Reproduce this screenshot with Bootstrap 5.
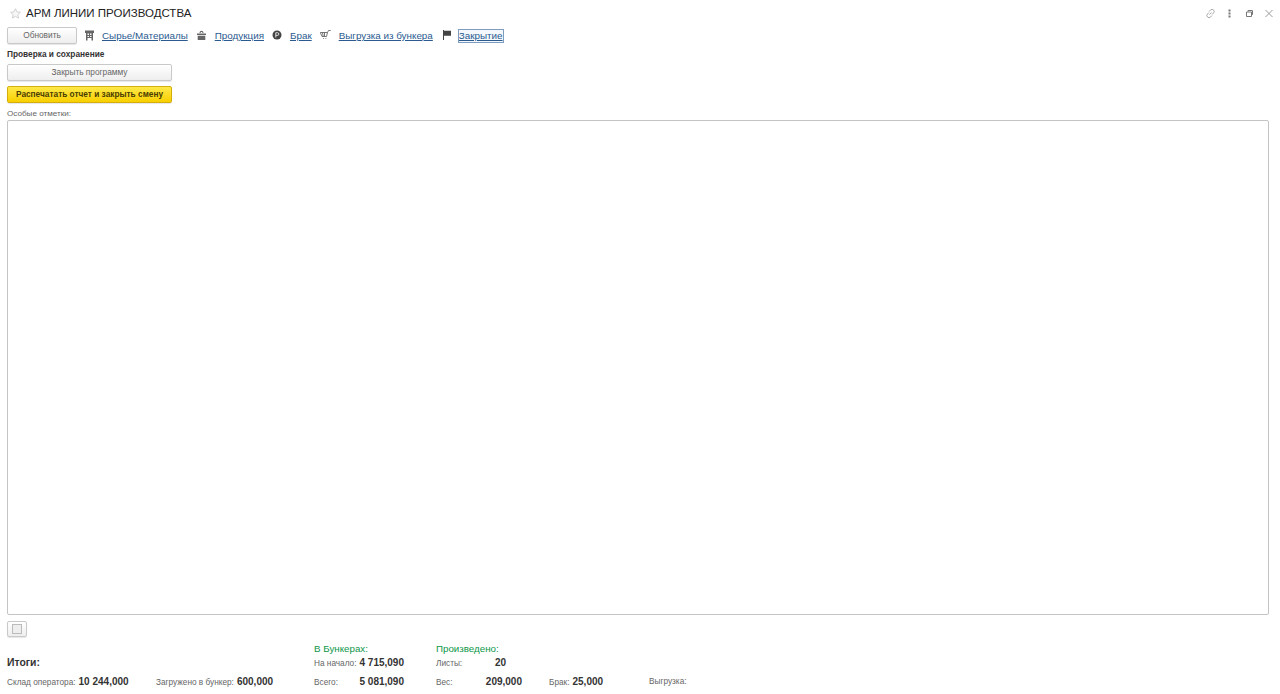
<!DOCTYPE html>
<html lang="ru">
<head>
  <meta charset="UTF-8" />
  <meta name="viewport" content="width=device-width, initial-scale=1" />
  <title>АРМ линии производства</title>
  <link href="https://cdn.jsdelivr.net/npm/bootstrap@5.3.0/dist/css/bootstrap.min.css" rel="stylesheet" />
  <style>
    html, body { height: 100%; overflow: hidden; }
    body {
      font-family: "Liberation Sans", Arial, sans-serif;
      font-size: 9px;
      color: #333;
      background: #fff;
    }
    .app-page { height: 694px; padding: 0 11px 0 7px; }
    .title-row { height: 26px; padding-top: 1px; }
    .title-text { font-size: 11.5px; color: #222; margin-left: 5px; }
    .win-tools { gap: 9px; margin-right: -5px; }
    .tool-row { height: 18px; margin-bottom: 2px; }
    .btn-1c {
      display: block;
      padding: 0;
      font-size: 8.3px;
      color: #666;
      border: 1px solid #c9c9c9;
      border-radius: 2px;
      background: linear-gradient(#fff, #eee);
      box-shadow: 0 1px 1px rgba(0, 0, 0, .1);
      line-height: 15px;
      height: 17px;
    }
    .btn-refresh { width: 70px; }
    .btn-wide { width: 165px; }
    .btn-close-app { margin-bottom: 5px; }
    .btn-yellow {
      color: #4a3d00;
      font-weight: 700;
      border-color: #d6ae0c;
      background: linear-gradient(#ffe94a, #f9cf00);
    }
    .nav-link-1c { font-size: 9.85px; color: #2a5a90; text-decoration: underline; line-height: 12px; margin-top: 2px; }
    .nav-link-active { outline: 1px solid #7d9cc0; outline-offset: 0; background: #f4f8fc; }
    .nav-ico { display: block; flex: none; }
    .group-title { font-size: 8.3px; font-weight: 700; color: #333; line-height: 10px; margin: 5px 0 5px; }
    .notes-label { font-size: 8.1px; color: #666; line-height: 10px; margin-top: 6px; margin-bottom: 1px; }
    .notes-box {
      display: block;
      width: 100%;
      height: 495px;
      border: 1px solid #c4c4c4;
      border-radius: 2px;
      background: #fff;
      resize: none;
    }
    .btn-square { width: 20px; height: 16px; margin-top: 6px; }
    .totals-grid {
      display: grid;
      grid-template-columns: 149px 158px 122px 113px 100px auto;
      grid-template-rows: 14px 14px 24px;
      margin-top: 5px;
      align-items: center;
      justify-content: start;
    }
    .total-head { font-size: 9.75px; color: #0d9648; }
    .total-main { font-size: 10.4px; font-weight: 700; color: #333; }
    .total-label { font-size: 8.25px; color: #666; white-space: nowrap; }
    .total-value { font-size: 10px; font-weight: 700; color: #333; white-space: nowrap; margin-left: 3px; }
    .value-end { margin-left: auto; }
    .cell-sheets { width: 70px; }
    .cell-total { width: 90px; }
    .cell-weight { width: 86px; }
    .span-all { grid-column: 1 / span 2; }
  </style>
</head>
<body>
<div class="app-page">

  <!-- Заголовок -->
  <div class="title-row d-flex align-items-center">
    <svg class="nav-ico" style="margin-left:3px" width="11" height="11" viewBox="0 0 12 12"><path d="M6 .8l1.6 3.4 3.7.5-2.7 2.6.7 3.7L6 9.2l-3.3 1.8.7-3.7L.7 4.7l3.7-.5z" fill="#f7f7f7" stroke="#c9c9c9" stroke-width=".9"/></svg>
    <span class="title-text">АРМ ЛИНИИ ПРОИЗВОДСТВА</span>
    <div class="win-tools d-flex align-items-center ms-auto">
      <svg class="nav-ico" width="11" height="11" viewBox="0 0 11 11" fill="none" stroke="#aaa" stroke-width="1"><path d="M4.500 6.500l2-2M4 3.500l1.500-1.500a2 2 0 0 1 3 3L7 6.500M7 7.500L5.500 9a2 2 0 0 1-3-3L4 4.500"/></svg>
      <svg class="nav-ico" width="9" height="11" viewBox="0 0 9 11" fill="#777"><rect x="3.500" y="1.500" width="2" height="2"/><rect x="3.500" y="4.500" width="2" height="2"/><rect x="3.500" y="7.500" width="2" height="2"/></svg>
      <svg class="nav-ico" style="margin-left:2px" width="9" height="11" viewBox="0 0 9 11" fill="none" stroke="#777"><path d="M1.500 4h5v4.500h-5zM3 3.500V2.500h4.500V6.500H7"/></svg>
      <svg class="nav-ico" style="margin-left:1px" width="10" height="11" viewBox="0 0 10 11" fill="none" stroke="#999"><path d="M1.500 2l7 7M8.500 2l-7 7"/></svg>
    </div>
  </div>

  <!-- Панель команд -->
  <div class="tool-row d-flex align-items-center">
    <button type="button" class="btn-1c btn-refresh text-center">Обновить</button>
    <svg class="nav-ico ms-2" width="9" height="11" viewBox="0 0 9 11" fill="#666"><path d="M0 .5h9V3H8v7.500H6.500V8h-4v2.500H1V3H0zM2.500 3.500V5H4V3.500zM5 3.500V5h1.500V3.500zM2.500 6v1H4V6zM5 6v1h1.500V6z" fill-rule="evenodd"/></svg>
    <a class="nav-link-1c ms-2" href="#">Сырье/Материалы</a>
    <svg class="nav-ico" style="margin-left:9px" width="9" height="10" viewBox="0 0 9 10" fill="#666"><path d="M0 3.500h9V5H0zM.7 5.700h7.600V10H.7zM2.500 3c0-3 4-3 4 0H5.500c0-1.500-2-1.500-2 0z"/></svg>
    <a class="nav-link-1c" style="margin-left:9px" href="#">Продукция</a>
    <svg class="nav-ico ms-2" width="10" height="10" viewBox="0 0 10 10"><circle cx="5" cy="5" r="4.500" fill="#444"/><path d="M3.800 7.500V2.700h1.700a1.200 1.200 0 0 1 0 2.700H3.800" fill="none" stroke="#ddd"/></svg>
    <a class="nav-link-1c ms-2" href="#">Брак</a>
    <svg class="nav-ico ms-2" width="11" height="10" viewBox="0 0 11 10" fill="none" stroke="#666" stroke-width=".9"><path d="M.300 2.500h7.200L6.500 6.500H2zM2.500 2.500l.7 4M4.500 2.500v4M3 8.500h.8M5.500 8.500h.8M7.500 2.500l1-2h2.200"/></svg>
    <a class="nav-link-1c ms-2" href="#">Выгрузка из бункера</a>
    <svg class="nav-ico" style="margin-left:10px" width="8" height="10" viewBox="0 0 8 10" fill="#444"><path d="M0 0h1v10H0zM1 .8h7v5H1z"/></svg>
    <a class="nav-link-1c nav-link-active ms-2" href="#">Закрытие</a>
  </div>

  <!-- Проверка и сохранение -->
  <div class="group-title">Проверка и сохранение</div>
  <button type="button" class="btn-1c btn-wide btn-close-app text-center">Закрыть программу</button>
  <button type="button" class="btn-1c btn-wide btn-yellow text-center">Распечатать отчет и закрыть смену</button>

  <div class="notes-label">Особые отметки:</div>
  <textarea class="notes-box form-control p-0" aria-label="Особые отметки"></textarea>

  <button type="button" class="btn-1c btn-square d-flex align-items-center justify-content-center" aria-label="Флажок">
    <svg width="10" height="10" viewBox="0 0 10 10"><rect x=".5" y=".5" width="9" height="9" fill="#eee" stroke="#bbb"/></svg>
  </button>

  <!-- Итоги -->
  <div class="totals-grid">
    <div class="span-all"></div>
    <div class="total-head">В Бункерах:</div>
    <div class="total-head">Произведено:</div>
    <div></div>
    <div></div>

    <div class="total-main span-all">Итоги:</div>
    <div class="d-flex align-items-baseline"><span class="total-label">На начало:</span><span class="total-value">4 715,090</span></div>
    <div class="d-flex align-items-baseline cell-sheets"><span class="total-label">Листы:</span><span class="total-value value-end">20</span></div>
    <div></div>
    <div></div>

    <div class="d-flex align-items-baseline"><span class="total-label">Склад оператора:</span><span class="total-value">10 244,000</span></div>
    <div class="d-flex align-items-baseline"><span class="total-label">Загружено в бункер:</span><span class="total-value">600,000</span></div>
    <div class="d-flex align-items-baseline cell-total"><span class="total-label">Всего:</span><span class="total-value value-end">5 081,090</span></div>
    <div class="d-flex align-items-baseline cell-weight"><span class="total-label">Вес:</span><span class="total-value value-end">209,000</span></div>
    <div class="d-flex align-items-baseline"><span class="total-label">Брак:</span><span class="total-value">25,000</span></div>
    <div class="total-label">Выгрузка:</div>
  </div>
</div>
<script src="https://cdn.jsdelivr.net/npm/bootstrap@5.3.0/dist/js/bootstrap.bundle.min.js"></script>
</body>
</html>
